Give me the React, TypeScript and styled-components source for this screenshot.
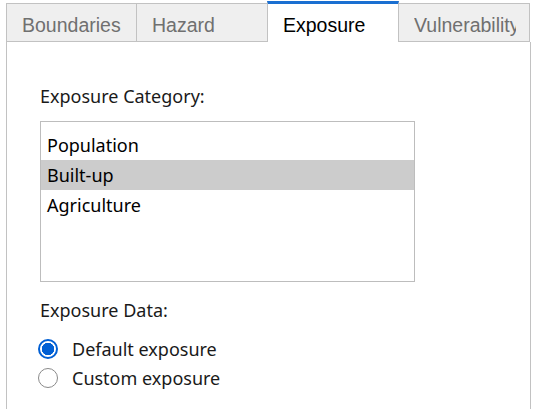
import React, { FC, useState } from 'react';
import styled, { createGlobalStyle } from 'styled-components';

const GlobalStyle = createGlobalStyle`
  html, body {
    margin: 0;
    padding: 0;
    background: #ffffff;
  }
  body {
    font-family: 'Noto Sans', 'Open Sans', sans-serif;
  }
`;

const TABS = ['Boundaries', 'Hazard', 'Exposure', 'Vulnerability'];
const CATEGORIES = ['Population', 'Built-up', 'Agriculture'];
const SOURCES = ['Default exposure', 'Custom exposure'];

const App: FC = () => {
  const [tab, setTab] = useState(2);
  const [category, setCategory] = useState(1);
  const [source, setSource] = useState(0);

  return (
    <>
      <GlobalStyle />
      <SWindow>
        <STabStrip>
          {TABS.map((name, i) => (
            <STab key={name} $active={i === tab} onClick={() => setTab(i)}>
              <STabLabel>{name}</STabLabel>
            </STab>
          ))}
        </STabStrip>
        <SPanel>
          <SLabel>Exposure Category:</SLabel>
          <SListBox>
            {CATEGORIES.map((item, i) => (
              <SListItem
                key={item}
                $selected={i === category}
                onClick={() => setCategory(i)}
              >
                {item}
              </SListItem>
            ))}
          </SListBox>
          <SLabel $gap={16}>Exposure Data:</SLabel>
          <SRadioGroup>
            {SOURCES.map((item, i) => (
              <SRadioRow key={item} onClick={() => setSource(i)}>
                <SRadio $checked={i === source} />
                {item}
              </SRadioRow>
            ))}
          </SRadioGroup>
        </SPanel>
      </SWindow>
    </>
  );
};

export default App;

const SWindow = styled.div`
  width: 525px;
  height: 409px;
  margin-left: 6px;
  padding-top: 1px;
  box-sizing: border-box;
  display: flex;
  flex-direction: column;
  overflow: hidden;
`;

const STabStrip = styled.div`
  display: flex;
  align-items: flex-end;
  height: 41px;
  flex-shrink: 0;
`;

const STab = styled.div<{ $active?: boolean }>`
  width: 132px;
  box-sizing: border-box;
  height: ${({ $active }) => ($active ? '41px' : '39px')};
  margin-left: -1px;
  padding-left: 15px;
  padding-top: 10px;
  border: 1px solid #c2c2c2;
  border-top: ${({ $active }) => ($active ? '3px solid #1a6fd1' : '1px solid #c2c2c2')};
  border-bottom: ${({ $active }) => ($active ? 'none' : '1px solid #c2c2c2')};
  background: ${({ $active }) => ($active ? '#ffffff' : '#efefef')};
  color: ${({ $active }) => ($active ? '#000000' : '#707070')};
  font-family: 'Liberation Sans', Arial, sans-serif;
  font-size: 19.5px;
  line-height: 22px;
  overflow: hidden;
  cursor: default;
  position: relative;
  z-index: ${({ $active }) => ($active ? 1 : 0)};

  &:first-child {
    margin-left: 0;
    width: 131px;
  }
`;

const STabLabel = styled.span`
  display: block;
  width: 102px;
  overflow: hidden;
  white-space: nowrap;
`;

const SPanel = styled.div`
  flex: 1;
  border-left: 1px solid #c2c2c2;
  border-right: 1px solid #c2c2c2;
  padding: 42px 0 0 33px;
  color: #1a1a1a;
  font-size: 18px;
`;

const SLabel = styled.div<{ $gap?: number }>`
  line-height: 24px;
  margin-top: ${({ $gap }) => $gap ?? 0}px;
`;

const SListBox = styled.div`
  width: 375px;
  height: 161px;
  box-sizing: border-box;
  margin-top: 13px;
  padding-top: 8px;
  border: 1px solid #bdbdbd;
  background: #ffffff;
`;

const SListItem = styled.div<{ $selected?: boolean }>`
  height: 30px;
  line-height: 30px;
  padding-left: 6px;
  background: ${({ $selected }) => ($selected ? '#cccccc' : 'transparent')};
  color: #000000;
  cursor: default;
`;

const SRadioGroup = styled.div`
  margin-top: 12px;
  display: flex;
  flex-direction: column;
`;

const SRadioRow = styled.label`
  display: flex;
  align-items: center;
  gap: 14px;
  height: 29px;
  color: #1a1a1a;
  cursor: default;
`;

const SRadio = styled.span<{ $checked?: boolean }>`
  width: 20px;
  height: 20px;
  box-sizing: border-box;
  margin-left: -2px;
  border-radius: 50%;
  flex-shrink: 0;
  border: ${({ $checked }) => ($checked ? '2px solid #005fd4' : '1.5px solid #8a8a8a')};
  background: ${({ $checked }) =>
    $checked ? 'radial-gradient(circle, #005fd4 0 6px, #ffffff 6.5px)' : '#ffffff'};
`;
